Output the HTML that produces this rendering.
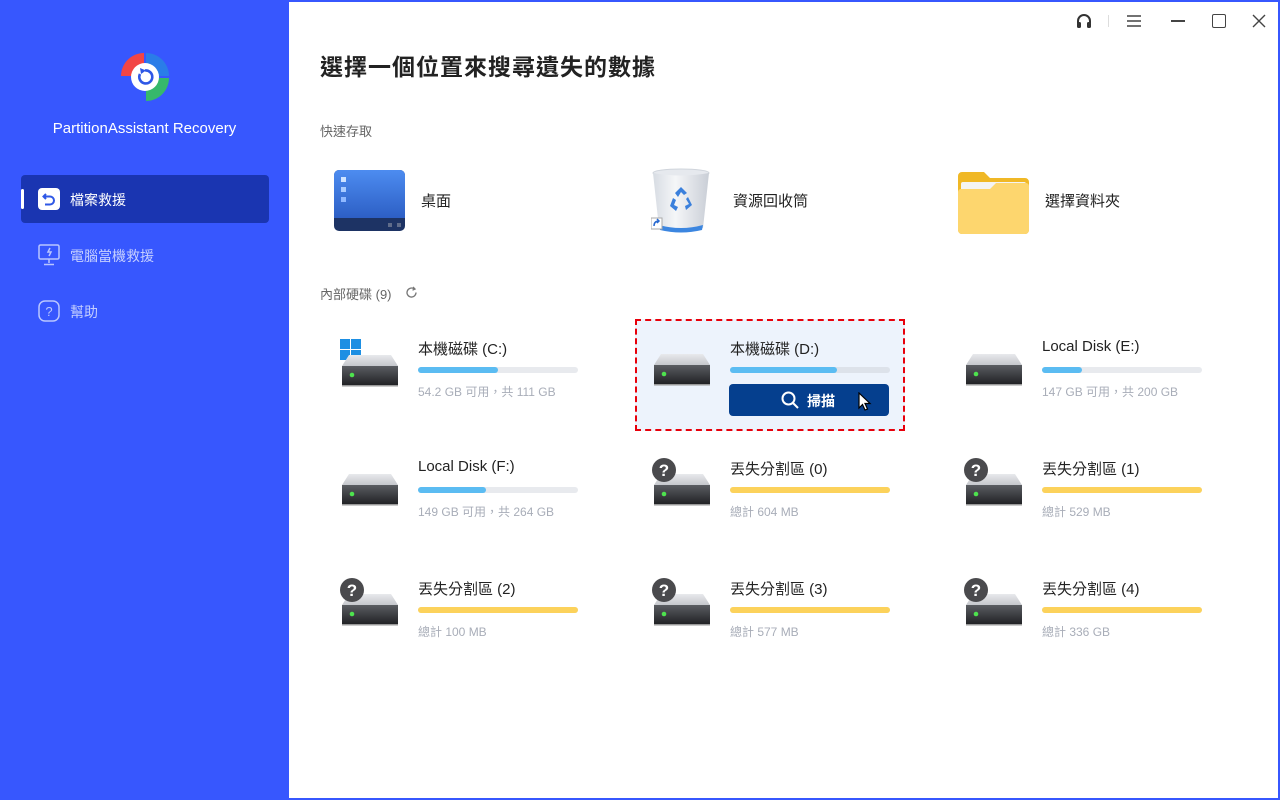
<!DOCTYPE html>
<html><head><meta charset="utf-8"><style>
*{margin:0;padding:0;box-sizing:border-box}
body{width:1280px;height:800px;overflow:hidden;background:#fff;font-family:"Liberation Sans","Noto Sans CJK TC",sans-serif;position:relative}
.side{position:absolute;left:0;top:0;width:289px;height:800px;background:#3757fe}
.frame{position:absolute;left:289px;top:0;width:991px;height:800px;border-top:2px solid #3757fe;border-right:2px solid #3757fe;border-bottom:2px solid #3757fe}
.a{position:absolute}
.t{position:absolute;white-space:nowrap}
.name{font-size:15px;color:#222}
.sub{font-size:12px;color:#a8adb8}
.bar{position:absolute;width:160px;height:6px;border-radius:3px;background:#e8eaee}
.bar i{display:block;height:6px;border-radius:3px;background:#5bbcf2}
.bar.y i{background:#fcd25b;width:100%}
</style></head><body>
<div class="side">
 <svg class="a" style="left:120px;top:52px" width="50" height="50" viewBox="0 0 50 50">
  <path d="M24 24 L24 1 A23 23 0 0 0 1 24 Z" fill="#f24545"/>
  <path d="M26 24 L26 1 A23 23 0 0 1 49 24 Z" fill="#2a7de8"/>
  <path d="M26 26 L49 26 A23 23 0 0 1 26 49 Z" fill="#36b86b"/>
  <circle cx="25" cy="25" r="14" fill="#fff"/>
  <path d="M20 22 A6.5 6.5 0 1 0 25 18.5" fill="none" stroke="#2f58e6" stroke-width="2.6"/>
  <path d="M20 16 L26 18.5 L21 22 Z" fill="#2f58e6"/>
 </svg>
 <div class="t" style="left:0;width:289px;text-align:center;top:120px;color:#fff;font-size:15px">PartitionAssistant Recovery</div>
 <div class="a" style="left:21px;top:175px;width:248px;height:48px;background:#1a35b1;border-radius:4px"></div>
 <div class="a" style="left:21px;top:189px;width:3px;height:20px;background:#fff;border-radius:2px"></div>
 <svg class="a" style="left:38px;top:188px" width="22" height="22" viewBox="0 0 22 22"><rect width="22" height="22" rx="4" fill="#fff"/><path d="M8 6 L5.5 8.5 L8 11 M6 8.5 H12 A4 4 0 0 1 12 16.5 H7" fill="none" stroke="#2f58e6" stroke-width="2"/></svg>
 <div class="t" style="left:70px;top:190px;color:#fff;font-size:14px">檔案救援</div>
 <svg class="a" style="left:38px;top:244px" width="22" height="22" viewBox="0 0 22 22" fill="none" stroke="#b9c6ff" stroke-width="1.5"><rect x="1" y="1" width="20" height="14" rx="1.5"/><path d="M11 15v4M6 20.5h10M12 4l-2 4h3l-2 4"/></svg>
 <div class="t" style="left:70px;top:246px;color:#c5cfff;font-size:14px">電腦當機救援</div>
 <svg class="a" style="left:38px;top:300px" width="22" height="22" viewBox="0 0 22 22" fill="none" stroke="#b9c6ff" stroke-width="1.5"><rect x="1" y="1" width="20" height="20" rx="6"/><text x="11" y="16" font-size="13" fill="#b9c6ff" stroke="none" text-anchor="middle" font-family="Liberation Sans">?</text></svg>
 <div class="t" style="left:70px;top:302px;color:#c5cfff;font-size:14px">幫助</div>
</div>
<div class="frame"></div>
<svg class="a" style="left:1075px;top:12px" width="18" height="18" viewBox="0 0 18 18"><path d="M3 11 V9 A6 6 0 0 1 15 9 V11" fill="none" stroke="#333" stroke-width="2"/><rect x="2" y="10" width="4" height="6" rx="1.5" fill="#333"/><rect x="12" y="10" width="4" height="6" rx="1.5" fill="#333"/></svg>
<div class="a" style="left:1108px;top:15px;width:1px;height:12px;background:#ddd"></div>
<svg class="a" style="left:1126px;top:14px" width="16" height="14" viewBox="0 0 16 14" stroke="#444" stroke-width="1.4"><path d="M1 2h14M1 7h14M1 12h14"/></svg>
<div class="a" style="left:1171px;top:20px;width:14px;height:1.5px;background:#444"></div>
<div class="a" style="left:1212px;top:14px;width:14px;height:14px;border:1.5px solid #444;border-radius:2px"></div>
<svg class="a" style="left:1252px;top:14px" width="14" height="14" stroke="#444" stroke-width="1.4"><path d="M1 1L13 13M13 1L1 13"/></svg>

<div class="t" style="left:320px;top:48px;font-size:23px;font-weight:bold;color:#222;letter-spacing:1px">選擇一個位置來搜尋遺失的數據</div>
<div class="t" style="left:320px;top:121px;font-size:13px;color:#666">快速存取</div>

<svg class="a" style="left:334px;top:170px" width="71" height="61" viewBox="0 0 71 61"><defs><linearGradient id="dg" x1="0" y1="0" x2="0" y2="1"><stop offset="0" stop-color="#4d8cf0"/><stop offset="1" stop-color="#2d5fc5"/></linearGradient></defs><rect width="71" height="61" rx="5" fill="#1d3364"/><path d="M5 0H66A5 5 0 0 1 71 5V48H0V5A5 5 0 0 1 5 0Z" fill="url(#dg)"/><rect x="7" y="7" width="5" height="5" fill="#cfe3ff"/><rect x="7" y="17" width="5" height="5" fill="#a9cbff"/><rect x="7" y="27" width="5" height="5" fill="#8fb8ff"/><rect x="54" y="53" width="4" height="4" fill="#5f6c8a"/><rect x="63" y="53" width="4" height="4" fill="#5f6c8a"/></svg>
<div class="t name" style="left:421px;top:190px">桌面</div>
<svg class="a" style="left:651px;top:168px" width="60" height="66" viewBox="0 0 60 66"><defs><linearGradient id="rb" x1="0" x2="1"><stop offset="0" stop-color="#d7dce3"/><stop offset=".4" stop-color="#f5f6f8"/><stop offset="1" stop-color="#c9ced6"/></linearGradient></defs><ellipse cx="30" cy="5" rx="28" ry="4" fill="#e6e9ee" stroke="#cfd4db"/><path d="M2 5 L8 60 Q30 66 52 60 L58 5 Q30 10 2 5Z" fill="url(#rb)"/><path d="M8 57 Q30 63 52 57 L51 62 Q30 67 9 62Z" fill="#3c86e0"/><g fill="#3b80dc"><path d="M24 25 L30 19 L36 25 L33 27 L30 24 L27 29Z"/><path d="M37 29 L41 37 L35 42 L34 38 L38 36 L35 31Z"/><path d="M22 30 L19 38 L25 43 L27 39 L23 37 L25 32Z"/></g><rect x="0" y="50" width="11" height="11" fill="#fff" stroke="#aaa"/><path d="M3 58 Q3 53 8 53 M6 51 L8 53 L6 55" fill="none" stroke="#2a6ad0" stroke-width="1.5"/></svg>
<div class="t name" style="left:733px;top:190px">資源回收筒</div>
<svg class="a" style="left:958px;top:172px" width="71" height="62" viewBox="0 0 71 62"><path d="M0 4 A4 4 0 0 1 4 0 H26 L32 6 H67 A4 4 0 0 1 71 10 V58 A4 4 0 0 1 67 62 H4 A4 4 0 0 1 0 58Z" fill="#f0b826"/><rect x="3" y="10" width="65" height="40" rx="2" fill="#f4f4f4"/><path d="M0 20 A3 3 0 0 1 3 17 H32 L38 11 H68 A3 3 0 0 1 71 14 V58 A4 4 0 0 1 67 62 H4 A4 4 0 0 1 0 58Z" fill="#fdd66e"/></svg>
<div class="t name" style="left:1045px;top:190px">選擇資料夾</div>

<div class="t" style="left:320px;top:284px;font-size:13px;color:#666">內部硬碟 (9)</div>
<svg class="a" style="left:405px;top:286px" width="13" height="13" viewBox="0 0 13 13" fill="none" stroke="#777" stroke-width="1.3"><path d="M11 6.5 A4.5 4.5 0 1 1 9 2.8"/><path d="M8 1 L10 3 L7.5 4.2"/></svg>

<div class="a" style="left:635px;top:319px;width:270px;height:112px;background:#edf3fc;border:2px dashed #e8000b"></div>

<svg width="0" height="0" style="position:absolute"><defs>
<linearGradient id="dt" x1="0" y1="0" x2="0" y2="1"><stop offset="0" stop-color="#e8e9ec"/><stop offset="1" stop-color="#c5c7cc"/></linearGradient>
<linearGradient id="db" x1="0" y1="0" x2="0" y2="1"><stop offset="0" stop-color="#5a5d62"/><stop offset="1" stop-color="#1e1f22"/></linearGradient>
<g id="drv"><path d="M7 0 H49 L56 11 H0Z" fill="url(#dt)"/><rect x="0" y="11" width="56" height="20" fill="url(#db)"/><rect x="0" y="30" width="56" height="1.5" fill="#999"/><circle cx="10" cy="20" r="2.3" fill="#4ee34e"/></g>
<g id="q"><circle cx="12" cy="12" r="12" fill="#4a4a4d"/><text x="12" y="18" font-size="17" font-weight="bold" fill="#fff" text-anchor="middle" font-family="Liberation Sans">?</text></g>
</defs></svg>

<svg class="a" style="left:340px;top:339px" width="60" height="48"><rect x="0" y="0" width="10" height="10" fill="#1d8fe3"/><rect x="11" y="0" width="10" height="10" fill="#1d8fe3"/><rect x="0" y="11" width="10" height="10" fill="#1d8fe3"/><rect x="11" y="11" width="10" height="10" fill="#1d8fe3"/><use href="#drv" x="2" y="16"/></svg>
<div class="t name" style="left:418px;top:338px">本機磁碟 (C:)</div>
<div class="bar" style="left:418px;top:367px"><i style="width:80px"></i></div>
<div class="t sub" style="left:418px;top:383px">54.2 GB 可用，共 111 GB</div>

<svg class="a" style="left:654px;top:354px" width="58" height="34"><use href="#drv"/></svg>
<div class="t name" style="left:730px;top:338px">本機磁碟 (D:)</div>
<div class="bar" style="left:730px;top:367px;background:#dde2ea"><i style="width:107px"></i></div>
<div class="a" style="left:729px;top:384px;width:160px;height:32px;background:#053f8e;border-radius:4px"></div>
<svg class="a" style="left:780px;top:390px" width="20" height="20" fill="none" stroke="#fff" stroke-width="2"><circle cx="8.5" cy="8.5" r="6"/><path d="M13 13 L18 18"/></svg>
<div class="t" style="left:807px;top:391px;color:#fff;font-size:14px;font-weight:bold">掃描</div>
<svg class="a" style="left:858px;top:392px" width="14" height="22" viewBox="0 0 14 22"><path d="M1 1 V16 L4.5 12.5 L7 18 L9.5 17 L7 11.5 H12Z" fill="#fff" stroke="#000" stroke-width="1.2"/></svg>

<svg class="a" style="left:966px;top:354px" width="58" height="34"><use href="#drv"/></svg>
<div class="t name" style="left:1042px;top:338px">Local Disk (E:)</div>
<div class="bar" style="left:1042px;top:367px"><i style="width:40px"></i></div>
<div class="t sub" style="left:1042px;top:383px">147 GB 可用，共 200 GB</div>

<svg class="a" style="left:342px;top:474px" width="58" height="34"><use href="#drv"/></svg>
<div class="t name" style="left:418px;top:458px">Local Disk (F:)</div>
<div class="bar" style="left:418px;top:487px"><i style="width:68px"></i></div>
<div class="t sub" style="left:418px;top:503px">149 GB 可用，共 264 GB</div>

<svg class="a" style="left:652px;top:458px" width="60" height="52"><use href="#drv" x="2" y="16"/><use href="#q"/></svg>
<div class="t name" style="left:730px;top:458px">丟失分割區 (0)</div>
<div class="bar y" style="left:730px;top:487px"><i></i></div>
<div class="t sub" style="left:730px;top:503px">總計 604 MB</div>

<svg class="a" style="left:964px;top:458px" width="60" height="52"><use href="#drv" x="2" y="16"/><use href="#q"/></svg>
<div class="t name" style="left:1042px;top:458px">丟失分割區 (1)</div>
<div class="bar y" style="left:1042px;top:487px"><i></i></div>
<div class="t sub" style="left:1042px;top:503px">總計 529 MB</div>

<svg class="a" style="left:340px;top:578px" width="60" height="52"><use href="#drv" x="2" y="16"/><use href="#q"/></svg>
<div class="t name" style="left:418px;top:578px">丟失分割區 (2)</div>
<div class="bar y" style="left:418px;top:607px"><i></i></div>
<div class="t sub" style="left:418px;top:623px">總計 100 MB</div>

<svg class="a" style="left:652px;top:578px" width="60" height="52"><use href="#drv" x="2" y="16"/><use href="#q"/></svg>
<div class="t name" style="left:730px;top:578px">丟失分割區 (3)</div>
<div class="bar y" style="left:730px;top:607px"><i></i></div>
<div class="t sub" style="left:730px;top:623px">總計 577 MB</div>

<svg class="a" style="left:964px;top:578px" width="60" height="52"><use href="#drv" x="2" y="16"/><use href="#q"/></svg>
<div class="t name" style="left:1042px;top:578px">丟失分割區 (4)</div>
<div class="bar y" style="left:1042px;top:607px"><i></i></div>
<div class="t sub" style="left:1042px;top:623px">總計 336 GB</div>
</body></html>
